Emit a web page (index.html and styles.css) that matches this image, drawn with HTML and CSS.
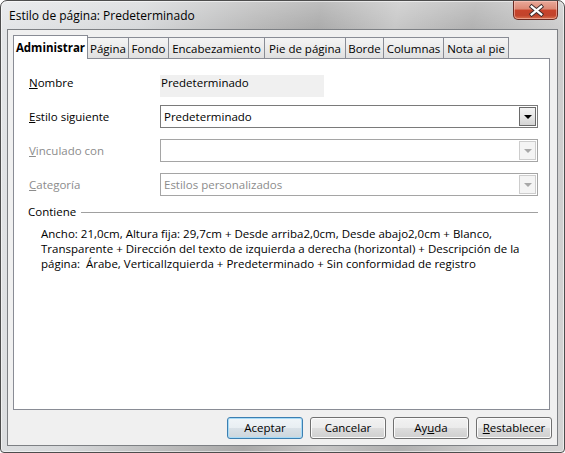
FILE: index.html
```html
<!DOCTYPE html>
<html lang="es">
<head>
<meta charset="utf-8">
<title>Estilo de página: Predeterminado</title>
<link rel="stylesheet" href="styles.css">
</head>
<body>
<div class="window">
  <div class="titlebar">
    <span class="title">Estilo de página: Predeterminado</span>
    <div class="close">
      <svg width="45" height="19" viewBox="0 0 45 19">
        <path d="M18.5 5.5 L28.5 13.5 M28.5 5.5 L18.5 13.5" stroke="#3a2a2a" stroke-width="4.2" stroke-linecap="square" fill="none"/>
        <path d="M18.5 5.5 L28.5 13.5 M28.5 5.5 L18.5 13.5" stroke="#ffffff" stroke-width="2.4" stroke-linecap="square" fill="none"/>
      </svg>
    </div>
  </div>
  <div class="client">
    <div class="tabs">
      <div class="tab active t-admin">Administrar</div>
      <div class="tab t-pagina">Página</div>
      <div class="tab t-fondo">Fondo</div>
      <div class="tab t-encab">Encabezamiento</div>
      <div class="tab t-pie">Pie de página</div>
      <div class="tab t-borde">Borde</div>
      <div class="tab t-col">Columnas</div>
      <div class="tab t-nota">Nota al pie</div>
    </div>
    <div class="panel">
      <div class="row row-name">
        <span class="label"><u>N</u>ombre</span>
        <div class="namebox">Predeterminado</div>
      </div>
      <div class="row row-next">
        <span class="label"><u>E</u>stilo siguiente</span>
        <div class="combo">
          <span class="combo-text">Predeterminado</span>
          <span class="combo-btn"><span class="arrow"></span></span>
        </div>
      </div>
      <div class="row row-dis">
        <span class="label disabled"><u>V</u>inculado con</span>
        <div class="combo disabled">
          <span class="combo-text"></span>
          <span class="combo-btn"><span class="arrow"></span></span>
        </div>
      </div>
      <div class="row row-dis">
        <span class="label disabled"><u>C</u>ategoría</span>
        <div class="combo disabled">
          <span class="combo-text">Estilos personalizados</span>
          <span class="combo-btn"><span class="arrow"></span></span>
        </div>
      </div>
      <div class="group-head">
        <span>Contiene</span>
        <span class="rule"></span>
      </div>
      <p class="contains">Ancho: 21,0cm, Altura fija: 29,7cm + Desde arriba2,0cm, Desde abajo2,0cm + Blanco,<br>Transparente + Dirección del texto de izquierda a derecha (horizontal) + Descripción de la<br>página:&nbsp; Árabe, VerticalIzquierda + Predeterminado + Sin conformidad de registro</p>
    </div>
    <div class="buttons">
      <button class="btn default">Aceptar</button>
      <button class="btn">Cancelar</button>
      <button class="btn">Ay<u>u</u>da</button>
      <button class="btn"><u>R</u>establecer</button>
    </div>
  </div>
</div>
</body>
</html>
```
FILE: styles.css
```css
* { box-sizing: border-box; }
html, body { margin: 0; padding: 0; background: #ffffff; }
body {
  font-family: "Open Sans", "Noto Sans", sans-serif;
  font-size: 11.5px;
  color: #000;
}
.window {
  width: 565px;
  height: 453px;
  border: 1px solid #4d4d4d;
  border-radius: 7px 7px 4px 4px;
  background:
    linear-gradient(180deg, rgba(255,255,255,0.25) 0px, rgba(255,255,255,0) 30px),
    linear-gradient(100deg, #e4e6e8 0%, #d6d8da 22%, #b8b8b8 40%, #a9a9a9 50%, #c6c6c6 62%, #b0b0b0 74%, #cdcdcd 88%, #d4d4d4 100%);
  padding: 0 6px 6px 6px;
  display: flex;
  flex-direction: column;
  box-shadow: inset 0 0 0 1px rgba(255,255,255,0.55);
}
.titlebar {
  height: 28px;
  display: flex;
  justify-content: space-between;
  align-items: flex-start;
}
.title {
  font-size: 12px;
  padding-left: 2px;
  line-height: 28px;
  padding-top: 1px;
  color: #000;
}
.close {
  width: 45px;
  height: 19px;
  border: 1px solid #6b2a22;
  border-top: none;
  border-radius: 0 0 5px 5px;
  background: linear-gradient(180deg, #e9a99a 0%, #dc8874 45%, #c8432b 50%, #c1432c 80%, #d9714f 100%);
  box-shadow: inset 0 0 0 1px rgba(255,210,200,0.5);
  display: flex;
}
.close svg { display: block; }
.client {
  flex: 1;
  border: 1px solid #7d8084;
  background: #f0f0f0;
  padding: 5px 5px 6px 5px;
  display: flex;
  flex-direction: column;
}
.tabs {
  display: flex;
  align-items: flex-end;
  height: 23px;
  position: relative;
  z-index: 2;
}
.tab {
  height: 21px;
  border: 1px solid #898c95;
  border-bottom: none;
  margin-left: -1px;
  background: linear-gradient(180deg, #f4f4f4 0%, #ebebeb 50%, #e0e0e0 100%);
  display: flex;
  align-items: center;
  justify-content: center;
  font-size: 11.5px;
  padding-top: 1px;
}
.tab:first-child { margin-left: 0; }
.tab.active {
  height: 24px;
  background: #ffffff;
  font-weight: bold;
  margin-bottom: -1px;
  position: relative;
  z-index: 3;
  padding-top: 0;
}
.t-admin { width: 75px; }
.t-pagina { width: 42px; }
.t-fondo { width: 41px; }
.t-encab { width: 97px; }
.t-pie { width: 82px; }
.t-borde { width: 39px; }
.t-col { width: 61px; }
.t-nota { width: 66px; }
.panel {
  flex: 1;
  background: #ffffff;
  border: 1px solid #898c95;
  margin-right: 2px;
  padding: 16px 11px 0 14px;
  display: flex;
  flex-direction: column;
}
.row {
  display: grid;
  grid-template-columns: 132px 1fr;
  align-items: center;
}
.row-name { height: 22px; align-items: start; }
.row-next { margin-top: 8px; height: 23px; }
.row-dis { margin-top: 11px; height: 23px; }
.label { line-height: 16px; padding-left: 1px; }
.label.disabled { color: #8c8c8c; }
.namebox {
  width: 164px;
  height: 22px;
  background: #f0f0f0;
  line-height: 16px;
  padding-left: 1px;
}
.row-name .label { line-height: 16px; }
.combo {
  height: 23px;
  border: 1px solid #7a7a7a;
  background: #ffffff;
  padding: 1px;
  display: flex;
  align-items: center;
}
.combo.disabled { border-color: #a5a5a5; }
.combo-text { flex: 1; padding-left: 2px; line-height: 16px; }
.combo.disabled .combo-text { color: #8c8c8c; }
.combo-btn {
  width: 17px;
  height: 19px;
  border: 1px solid #6a6a6a;
  background: linear-gradient(180deg, #f3f3f3 0%, #e6e6e6 50%, #d4d4d4 100%);
  display: flex;
  align-items: center;
  justify-content: center;
}
.combo.disabled .combo-btn {
  border-color: #cdcdcd;
  background: #f4f4f4;
}
.arrow {
  width: 0;
  height: 0;
  border-left: 4px solid transparent;
  border-right: 4px solid transparent;
  border-top: 4px solid #000;
  margin-top: 1px;
}
.combo.disabled .arrow { border-top-color: #a8a8a8; }
.group-head {
  margin-top: 8px;
  display: flex;
  align-items: center;
  line-height: 15px;
}
.group-head .rule {
  flex: 1;
  height: 1px;
  background: #a0a0a0;
  margin-left: 5px;
  margin-top: 1px;
}
.contains {
  margin: 8px 0 0 13px;
  line-height: 14.8px;
  white-space: nowrap;
}
.buttons {
  display: flex;
  justify-content: flex-end;
  gap: 7px;
  margin-top: 7px;
}
.btn {
  width: 76px;
  height: 22px;
  border: 1px solid #707070;
  border-radius: 3px;
  background: linear-gradient(180deg, #f2f2f2 0%, #ebebeb 50%, #dddddd 50%, #cfcfcf 100%);
  box-shadow: inset 0 0 0 1px #fbfbfb;
  font-family: "Open Sans", "Noto Sans", sans-serif;
  font-size: 11.5px;
  color: #000;
  padding: 0;
  line-height: 18px;
}
.btn.default {
  border-color: #3c7fb1;
  box-shadow: inset 0 0 0 1px #a7dbf7;
  background: linear-gradient(180deg, #f0f5f8 0%, #e8eef2 50%, #d9e1e7 50%, #cdd6dc 100%);
}
```
